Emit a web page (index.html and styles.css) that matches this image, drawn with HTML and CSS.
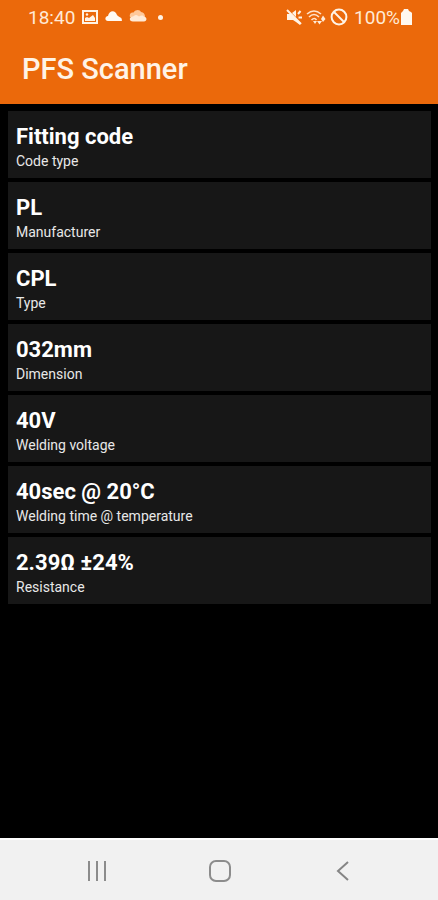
FILE: index.html
```html
<!DOCTYPE html>
<html lang="en">

<head>
    <meta charset="UTF-8">
    <meta name="viewport" content="width=device-width, initial-scale=1.0">

    <link rel="stylesheet" href="styles.css">

    <title>PFS Scanner</title>
</head>

<body>
    <header class="header">
        <div class="status">
            <div class="status-left">
                <span class="clock">18:40</span>
                <svg width="16" height="16" viewBox="0 0 16 16">
                    <path d="M1 2h14v12H1z" fill="none" stroke="#fff3e6" stroke-width="2" />
                    <path d="M3 12V9l2-1 2 1 4-3 2 3v3z" fill="#fff3e6" />
                    <circle cx="5" cy="5.500" r="1.200" fill="#fff3e6" />
                </svg>
                <svg width="17" height="16" viewBox="0 0 17 16">
                    <path d="M3 12C-.5 12-.5 7.500 3 7 4 1 10.500.5 12 6c1 1 1.500 1.500 2.500 2q3 .8 2.300 4z" fill="#fffaf3" />
                </svg>
                <svg width="18" height="16" viewBox="0 0 18 16">
                    <path d="M1 8C0 4 3 3 4.500 3.500 7 0 11 .5 12 3q4 .5 4 5z" fill="#ffc899" />
                    <path d="M4 12.500C-.5 12.500 0 7.500 4 7.500c2-2 4-2 6 0 2-1.500 4-1.500 5 .2 3.500 0 3 4.800 0 4.800z" fill="#ffead6" />
                </svg>
                <span class="dot"></span>
            </div>
            <div class="status-right">
                <svg width="16" height="16" viewBox="0 0 16 16">
                    <path d="M1 5h4l9 9v2l-4-3-3-2H1zM6 4l4-3v7z" fill="#fff3e6" />
                    <path d="M1 1l14 14M12 5l2.500-3M12.500 8.500H16" fill="none" stroke="#fff3e6" stroke-width="2" />
                </svg>
                <svg width="20" height="16" viewBox="0 0 20 16">
                    <path d="M1 5q7-6 14 0M3 8q5-5 10 0M5.500 11q3-3 5 0" fill="none" stroke="#ffe3cb" stroke-width="1.600" />
                    <path d="M7 12h4l-2 3zM11 12h5l-2.500 3.500zM15 10l2-3.500 2.500 3.500-2.500 3z" fill="#ffead6" />
                </svg>
                <svg width="18" height="18" viewBox="0 0 18 18">
                    <circle cx="9" cy="9" r="7.400" fill="none" stroke="#fff3e6" stroke-width="2" />
                    <path d="M4 4l10 10" stroke="#fff3e6" stroke-width="2" />
                </svg>
                <span class="battery">
                    100%
                    <svg width="12" height="16" viewBox="0 0 12 16">
                        <path d="M4 0h4l1 2 2 1 1 1v12H1V4l1-1 1-1z" fill="#fff8ef" />
                    </svg>
                </span>
            </div>
        </div>
        <h1>PFS Scanner</h1>
    </header>

    <main>
        <dl class="list">
            <div class="card">
                <dt>Code type</dt>
                <dd>Fitting code</dd>
            </div>
            <div class="card">
                <dt>Manufacturer</dt>
                <dd>PL</dd>
            </div>
            <div class="card">
                <dt>Type</dt>
                <dd>CPL</dd>
            </div>
            <div class="card">
                <dt>Dimension</dt>
                <dd>032mm</dd>
            </div>
            <div class="card">
                <dt>Welding voltage</dt>
                <dd>40V</dd>
            </div>
            <div class="card">
                <dt>Welding time @ temperature</dt>
                <dd>40sec @ 20°C</dd>
            </div>
            <div class="card">
                <dt>Resistance</dt>
                <dd>2.39Ω ±24%</dd>
            </div>
        </dl>
    </main>

    <nav class="navbar">
        <button type="button" aria-label="Recent apps">
            <svg width="22" height="22" viewBox="0 0 22 22">
                <path d="M3 1v20M11 1v20M19 1v20" stroke="#8c8c8c" stroke-width="2" />
            </svg>
        </button>
        <button type="button" aria-label="Home">
            <svg width="22" height="22" viewBox="0 0 22 22">
                <rect x="1" y="1" width="20" height="20" rx="6" fill="none" stroke="#8c8c8c" stroke-width="2" />
            </svg>
        </button>
        <button type="button" aria-label="Back">
            <svg width="22" height="22" viewBox="0 0 22 22">
                <path d="M16 2L6 11l10 9" fill="none" stroke="#858585" stroke-width="2" />
            </svg>
        </button>
    </nav>
</body>

</html>
```

FILE: styles.css
```css
*,
*::before,
*::after {
    box-sizing: border-box;
}

body {
    display: flex;
    flex-direction: column;
    min-height: 100vh;
    margin: 0;
    font-family: Roboto, sans-serif;
    color: #fff;
    background: #000;
}

svg {
    display: block;
}

.header {
    background: #eb690b;
}

.status {
    display: flex;
    justify-content: space-between;
    align-items: center;
    height: 34px;
    padding: 0 26px 0 28px;
    font-size: 19px;
    color: #ffead6;
}

.status-left {
    display: flex;
    align-items: center;
    gap: 7px;
}

.status-right {
    display: flex;
    align-items: center;
    gap: 4px;
}

.battery {
    display: flex;
    align-items: center;
    margin-left: 2px;
}

.dot {
    width: 5px;
    height: 5px;
    margin-left: 4px;
    border-radius: 50%;
    background: #fff3e6;
}

h1 {
    margin: 0;
    padding: 17px 22px;
    font-size: 29px;
    font-weight: 500;
    line-height: 36px;
    color: #fff3e6;
}

main {
    flex: 1;
    padding: 7px 7px 7px 8px;
}

.list {
    display: grid;
    gap: 4px;
    margin: 0;
}

.card {
    display: flex;
    flex-direction: column-reverse;
    padding: 12px 8px 6px;
    background: #171717;
}

dd {
    margin: 0;
    font-size: 22px;
    font-weight: 700;
    line-height: 28px;
}

dt {
    font-size: 14px;
    line-height: 21px;
    color: #e8e8e8;
}

.navbar {
    display: grid;
    grid-template-columns: repeat(3, 1fr);
    height: 62px;
    padding: 0 34px 0 36px;
    border-top: 2px solid #fff;
    background: #f1f1f1;
}

.navbar button {
    display: flex;
    justify-content: center;
    align-items: center;
    padding: 2px 0 0;
    border: 0;
    background: none;
}
```
